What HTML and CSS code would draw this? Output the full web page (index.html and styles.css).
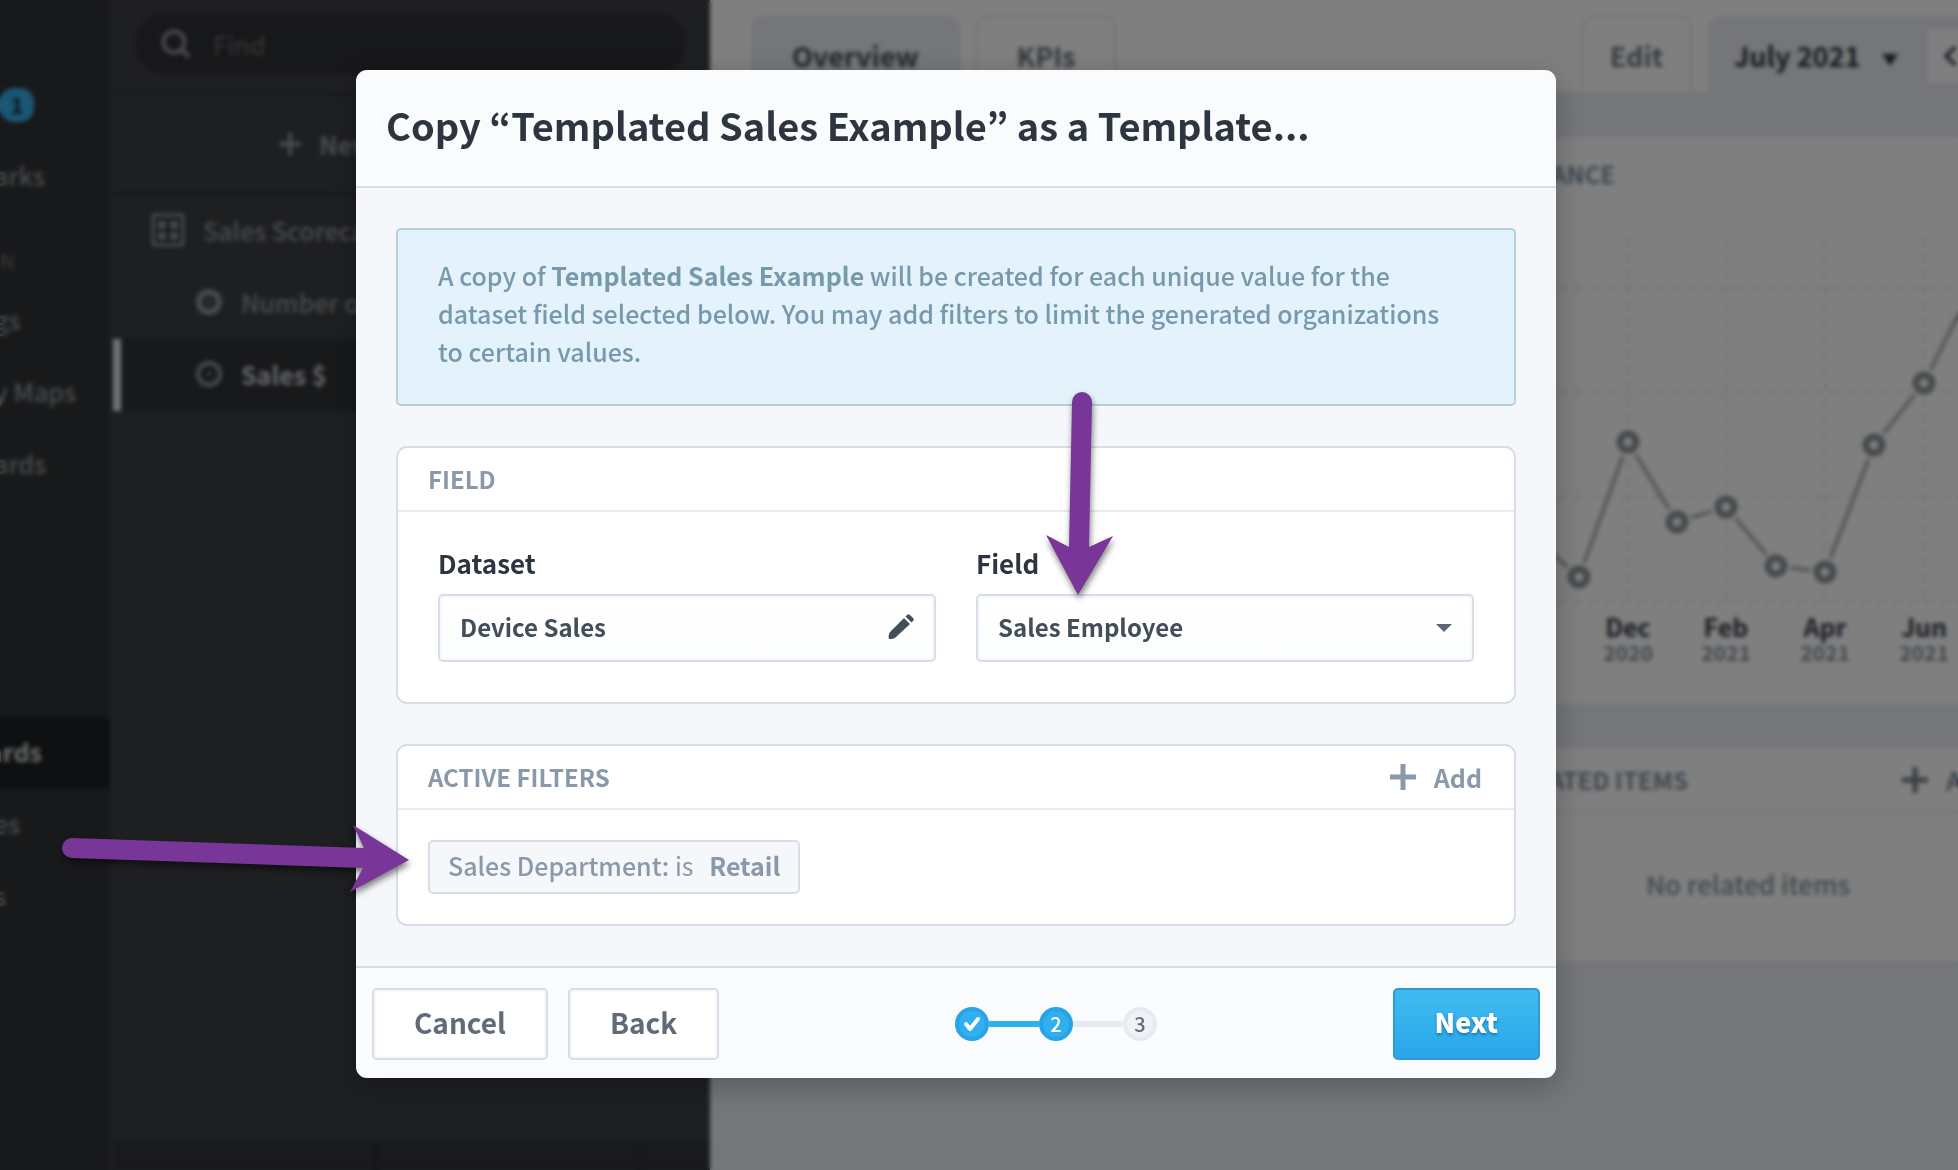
FILE: index.html
```html
<!DOCTYPE html>
<html lang="en">
<head>
    <meta charset="UTF-8">
    <meta name="viewport" content="width=device-width, initial-scale=1.0">
    <title>Copy as a Template</title>
    <link rel="stylesheet" href="styles.css">
</head>
<body>
    <div class="app">
        <nav class="nav">
            <ul>
                <li><span class="badge">1</span></li>
                <li><a href="#">arks</a></li>
                <li class="nav-heading">N</li>
                <li><a href="#">gs</a></li>
                <li><a href="#">y Maps</a></li>
                <li><a href="#">ards</a></li>
                <li></li>
                <li></li>
                <li></li>
                <li class="active"><a href="#">ards</a></li>
                <li><a href="#">es</a></li>
                <li><a href="#">s</a></li>
            </ul>
        </nav>

        <aside class="tree">
            <div class="tree-search">
                <label class="search">
                    <svg width="30" height="30" viewBox="0 0 30 30" fill="none" stroke="currentColor" stroke-width="4">
                        <circle cx="13" cy="13" r="10.5"/>
                        <path d="M20 20l8 8"/>
                    </svg>
                    <input type="text" placeholder="Find" aria-label="Find">
                </label>
            </div>
            <button class="tree-new" type="button">
                <svg width="22" height="22" viewBox="0 0 22 22" fill="none" stroke="currentColor" stroke-width="4"><path d="M11 0v22M0 11h22"/></svg>
                New
            </button>
            <ul class="tree-list">
                <li>
                    <svg width="34" height="34" viewBox="0 0 34 34" fill="none" stroke="currentColor" stroke-width="3">
                        <rect x="2" y="2" width="30" height="30" rx="2"/>
                        <g fill="currentColor" stroke="none"><circle cx="11" cy="12" r="4"/><circle cx="23" cy="12" r="4"/><circle cx="11" cy="23" r="4"/><circle cx="23" cy="23" r="4"/></g>
                    </svg>
                    Sales Scorecard
                </li>
                <li class="child">
                    <svg width="28" height="28" viewBox="0 0 28 28" fill="none" stroke="currentColor" stroke-width="6"><circle cx="14" cy="14" r="10"/><circle cx="14" cy="14" r="2" fill="currentColor" stroke="none"/></svg>
                    Number of
                </li>
                <li class="child active">
                    <svg width="28" height="28" viewBox="0 0 28 28" fill="none" stroke="currentColor" stroke-width="4"><circle cx="14" cy="14" r="11"/><circle cx="14" cy="14" r="2" fill="currentColor" stroke="none"/></svg>
                    Sales $
                </li>
            </ul>
            <div class="tree-toolbar"><span></span><span></span><span></span></div>
        </aside>

        <main class="main">
            <div class="tabs">
                <a class="tab current" href="#">Overview</a>
                <a class="tab" href="#">KPIs</a>
                <a class="tab tab-edit" href="#">Edit</a>
                <div class="period">
                    <button class="period-label" type="button">
                        July 2021
                        <svg width="16" height="12" viewBox="0 0 16 12" fill="currentColor"><path d="M0 0h16L8 12z"/></svg>
                    </button>
                    <button class="period-prev" type="button" aria-label="Previous period">
                        <svg width="16" height="20" viewBox="0 0 16 20" fill="none" stroke="currentColor" stroke-width="4"><path d="M13 1L4 10l9 9"/></svg>
                    </button>
                </div>
            </div>
            <div class="panels">
                <section class="panel">
                    <div class="panel-column">
                        <h2 class="panel-title performance">PERFORMANCE</h2>
                        <svg class="chart" width="418" height="500" viewBox="1540 204 418 500">
                            <g class="grid">
                                <path d="M1540 288H1958M1540 392H1958M1540 497H1958M1540 602H1958"/>
                                <path d="M1628 237V602M1726 237V602M1825 237V602M1924 237V602"/>
                            </g>
                            <path class="line" d="M1530 534L1579 577L1628 442L1677 522L1726 507L1776 566L1825 572L1874 445L1924 383L1973 285"/>
                            <g class="halos">
                                <circle cx="1579" cy="577" r="15"/>
                                <circle cx="1628" cy="442" r="15"/>
                                <circle cx="1677" cy="522" r="15"/>
                                <circle cx="1726" cy="507" r="15"/>
                                <circle cx="1776" cy="566" r="15"/>
                                <circle cx="1825" cy="572" r="15"/>
                                <circle cx="1874" cy="445" r="15"/>
                                <circle cx="1924" cy="383" r="15"/>
                            </g>
                            <g class="points">
                                <circle cx="1579" cy="577" r="8"/>
                                <circle cx="1628" cy="442" r="8"/>
                                <circle cx="1677" cy="522" r="8"/>
                                <circle cx="1726" cy="507" r="8"/>
                                <circle cx="1776" cy="566" r="8"/>
                                <circle cx="1825" cy="572" r="8"/>
                                <circle cx="1874" cy="445" r="8"/>
                                <circle cx="1924" cy="383" r="8"/>
                            </g>
                            <g class="months">
                                <text x="1628" y="637">Dec</text>
                                <text x="1726" y="637">Feb</text>
                                <text x="1825" y="637">Apr</text>
                                <text x="1924" y="637">Jun</text>
                            </g>
                            <g class="years">
                                <text x="1628" y="661">2020</text>
                                <text x="1726" y="661">2021</text>
                                <text x="1825" y="661">2021</text>
                                <text x="1924" y="661">2021</text>
                            </g>
                        </svg>
                    </div>
                </section>
                <section class="panel">
                    <div class="panel-column">
                        <div class="panel-head">
                            <h2 class="panel-title">RELATED ITEMS</h2>
                            <button class="panel-add" type="button">
                                <svg width="26" height="26" viewBox="0 0 26 26" fill="none" stroke="currentColor" stroke-width="5"><path d="M13 0v26M0 13h26"/></svg>
                                A
                            </button>
                        </div>
                        <p class="panel-empty">No related items</p>
                    </div>
                </section>
            </div>
        </main>
    </div>

    <div class="overlay">
        <form class="modal" role="dialog" aria-labelledby="modal-title">
            <header class="modal-header">
                <h1 id="modal-title">Copy “Templated Sales Example” as a Template...</h1>
            </header>
            <div class="modal-body">
                <p class="info">A copy of <b>Templated Sales Example</b> will be created for each unique value for the dataset field selected below. You may add filters to limit the generated organizations to certain values.</p>

                <section class="card">
                    <div class="card-header"><h2>FIELD</h2></div>
                    <div class="fields">
                        <div class="field">
                            <label for="dataset">Dataset</label>
                            <button class="control" id="dataset" type="button">
                                Device Sales
                                <svg width="26" height="26" viewBox="0 0 26 26" fill="currentColor"><path d="M1 25c-1-3 0-5 1-7L16 4l6 6L8 23c-2 2-4 2-7 2z"/><path d="M17.500 2.500L19 1c1-1 2-1 3 0l3 3c1 1 1 2 0 3l-1.500 1.500z"/></svg>
                            </button>
                        </div>
                        <div class="field">
                            <label for="field">Field</label>
                            <div class="select">
                                <select class="control" id="field">
                                    <option>Sales Employee</option>
                                </select>
                                <svg class="caret" width="16" height="8" viewBox="0 0 16 8" fill="currentColor"><path d="M0 0h16L8 8z"/></svg>
                            </div>
                        </div>
                    </div>
                </section>

                <section class="card">
                    <div class="card-header">
                        <h2>ACTIVE FILTERS</h2>
                        <button class="add" type="button">
                            <svg width="26" height="26" viewBox="0 0 26 26" fill="none" stroke="currentColor" stroke-width="5"><path d="M13 0v26M0 13h26"/></svg>
                            Add
                        </button>
                    </div>
                    <div class="filters">
                        <div class="chip">Sales Department: <span>is</span> <b>Retail</b></div>
                    </div>
                </section>
            </div>
            <footer class="modal-footer">
                <div class="actions">
                    <button class="btn" type="button">Cancel</button>
                    <button class="btn" type="button">Back</button>
                </div>
                <ol class="steps">
                    <li class="done">
                        <svg width="18" height="16" viewBox="0 0 18 16" fill="none" stroke="currentColor" stroke-width="4" stroke-linecap="round" stroke-linejoin="round"><path d="M3 8l4 5 8-10"/></svg>
                    </li>
                    <li class="done">2</li>
                    <li>3</li>
                </ol>
                <button class="btn primary" type="submit">Next</button>
            </footer>
        </form>
    </div>

    <svg class="arrows" width="1958" height="1170" viewBox="0 0 1958 1170" aria-hidden="true">
        <path d="M72 838A10 10 0 0 0 72 858L363 868L350 892L409 860L353 825L364 848Z"/>
        <path d="M1072 402A10 10 0 0 1 1092 402L1089 547L1113 536L1078 595L1046 535L1069 547Z"/>
    </svg>
</body>
</html>
```

FILE: styles.css
```css
* {
    box-sizing: border-box;
}

body {
    margin: 0;
    height: 100vh;
    overflow: hidden;
    position: relative;
    font-family: "Noto Sans CJK KR", "Noto Sans", sans-serif;
    font-size: 25px;
    font-weight: 500;
    line-height: 38px;
    color: #2d3640;
}

h1, h2, p, ul, ol {
    margin: 0;
    padding: 0;
}

ul, ol {
    list-style: none;
}

a {
    color: inherit;
    text-decoration: none;
}

button, input, select {
    font: inherit;
    color: inherit;
    border: 0;
    background: none;
    padding: 0;
    margin: 0;
}

svg {
    flex: none;
}

/* App behind the dialog */
.app {
    display: flex;
    height: 100%;
    overflow: hidden;
}

.nav {
    width: 110px;
    flex: none;
    padding-top: 69px;
    background: #313336;
    color: #92989b;
    overflow: hidden;
}

.nav li {
    display: flex;
    align-items: center;
    height: 72px;
}

.nav a {
    margin-left: -6px;
    padding-bottom: 4px;
}

.nav .nav-heading {
    padding-top: 24px;
    font-size: 20px;
    color: #64686b;
}

.nav .active {
    background: #1c2023;
    color: #d4d8da;
    font-weight: 700;
}

.nav .active a {
    margin-left: -12px;
}

.badge {
    width: 34px;
    height: 34px;
    border-radius: 14px;
    background: #33aee8;
    color: #23282c;
    font-size: 22px;
    font-weight: 700;
    line-height: 32px;
    text-align: center;
}

/* Scorecard tree */
.tree {
    width: 600px;
    flex: none;
    display: flex;
    flex-direction: column;
    border-left: 3px solid #3c3e42;
    background: #3c3e42;
    color: #92989b;
}

.tree-search {
    padding: 13px 24px 18px 22px;
    border-bottom: 3px solid #303236;
}

.search {
    display: flex;
    align-items: center;
    gap: 22px;
    height: 61px;
    padding: 0 26px;
    border-radius: 30px;
    background: #2f3033;
}

.search input {
    width: 100%;
    min-width: 0;
}

.search input::placeholder {
    color: #606468;
    opacity: 1;
}

.tree-new {
    display: flex;
    align-items: center;
    gap: 18px;
    height: 100px;
    padding-left: 166px;
    border-bottom: 3px solid #303236;
    font-weight: 700;
}

.tree-list {
    flex: 1;
}

.tree-list li {
    display: flex;
    align-items: center;
    gap: 18px;
    height: 72px;
    padding: 0 0 2px 38px;
    white-space: nowrap;
}

.tree-list .child {
    padding-left: 82px;
}

.tree-list .child.active {
    padding-left: 74px;
    border-left: 8px solid #e4e6e8;
    background: #303236;
    color: #c8ccd0;
    font-weight: 700;
}

.tree-list .active svg {
    color: #92989b;
}

.tree-toolbar {
    display: grid;
    grid-template-columns: 261px 1fr 74px;
    height: 29px;
    background: #323438;
}

.tree-toolbar span + span {
    border-left: 3px solid #2a2c30;
}

/* Main page */
.main {
    flex: 1;
    min-width: 0;
    display: flex;
    flex-direction: column;
    background: #fff;
}

.tabs {
    display: flex;
    gap: 16px;
    padding: 16px 0 0 41px;
    font-size: 27px;
}

.tab {
    height: 76px;
    padding: 19px 39px 0;
    border: 2px solid #e3e7ee;
    border-bottom: 0;
    border-radius: 12px 12px 0 0;
    color: #6b7684;
    font-weight: 700;
}

.tab.current {
    background: #e8ecf2;
    color: #46505c;
}

.tab-edit {
    margin-left: auto;
    padding: 19px 27px 0;
}

.period {
    display: flex;
    align-items: flex-start;
    width: 250px;
    padding: 13px 0 0 26px;
    border-radius: 12px 0 0 0;
    background: #e8ecf2;
    color: #2d3640;
}

.period-label {
    display: flex;
    align-items: center;
    gap: 22px;
    width: 194px;
    height: 54px;
    font-weight: 700;
    white-space: nowrap;
}

.period-label svg {
    margin-top: 8px;
}

.period-prev {
    flex: 1;
    display: flex;
    align-items: center;
    justify-content: flex-end;
    height: 54px;
    border-radius: 4px 0 0 4px;
    background: #fff;
    color: #4c5866;
}

.panels {
    flex: 1;
    display: flex;
    flex-direction: column;
    gap: 44px;
    padding-top: 45px;
    background: #e8ecf2;
}

.panel {
    display: flex;
    justify-content: flex-end;
    background: #fff;
    color: #8393a4;
}

.panel-column {
    width: 460px;
    display: flex;
    flex-direction: column;
    overflow: hidden;
}

.panel-title {
    font-size: 24px;
    font-weight: 700;
}

.performance {
    width: 117px;
    height: 67px;
    padding-top: 18px;
    direction: rtl;
}

.chart {
    align-self: flex-end;
}

.grid path {
    fill: none;
    stroke: #e4e6e8;
    stroke-width: 2;
    stroke-dasharray: 10 6;
}

.line {
    fill: none;
    stroke: #acb0b3;
    stroke-width: 4;
}

.halos circle {
    fill: #fff;
}

.points circle {
    fill: #fff;
    stroke: #8b9599;
    stroke-width: 7;
}

.months, .years {
    text-anchor: middle;
    font-weight: 700;
}

.months {
    font-size: 25px;
    fill: #343a44;
}

.years {
    font-size: 21px;
    fill: #8492a2;
}

.panel-head {
    display: flex;
    align-items: center;
    justify-content: space-between;
    height: 65px;
    padding-left: 6px;
    border-bottom: 2px solid #e8ecf2;
}

.panel-add {
    display: flex;
    align-items: center;
    gap: 18px;
    width: 56px;
    color: #6f7d8e;
}

.panel-empty {
    width: 500px;
    padding: 52px 0 58px;
    font-size: 26px;
    text-align: center;
}

/* Dialog */
.overlay {
    position: absolute;
    inset: 0;
    display: flex;
    align-items: flex-start;
    justify-content: center;
    padding: 70px 46px 0 0;
    background: rgba(0, 0, 0, 0.5);
    backdrop-filter: blur(2px);
}

.modal {
    width: 1200px;
    border-radius: 11px;
    background: #fafbfd;
    box-shadow: 0 8px 30px rgba(0, 0, 0, 0.25);
    overflow: hidden;
}

.modal-header {
    padding: 28px 30px 34px;
    border-bottom: 2px solid #d7dee6;
}

.modal-header h1 {
    font-size: 38px;
    font-weight: 700;
    line-height: 54px;
}

.modal-body {
    display: flex;
    flex-direction: column;
    gap: 40px;
    padding: 40px;
    background: #f5f7fb;
}

.info {
    padding: 26px 60px 34px 40px;
    border: 2px solid #b5cfdc;
    border-radius: 5px;
    background: #e4f3fb;
    color: #7799ac;
}

.card {
    border: 2px solid #d7dee6;
    border-radius: 11px;
    background: #fff;
}

.card-header {
    display: flex;
    align-items: center;
    justify-content: space-between;
    height: 64px;
    padding: 0 32px 0 30px;
    border-bottom: 2px solid #e6ebf2;
    color: #8a99a9;
}

.card-header h2 {
    font-size: 24px;
    font-weight: 700;
}

.add {
    display: flex;
    align-items: center;
    gap: 18px;
    font-weight: 700;
}

.fields {
    display: grid;
    grid-template-columns: 1fr 1fr;
    gap: 40px;
    padding: 32px 40px 40px;
}

.field {
    display: flex;
    flex-direction: column;
    gap: 12px;
}

.field label {
    font-size: 26px;
    font-weight: 700;
}

.control {
    display: flex;
    align-items: center;
    justify-content: space-between;
    width: 100%;
    height: 68px;
    padding: 0 20px 2px;
    border: 2px solid #d7dee8;
    border-radius: 5px;
    background: linear-gradient(#fff, #fcfdfe);
    box-shadow: inset 0 0 0 2px #f6f8fb;
    color: #434e5a;
    font-size: 24px;
    font-weight: 700;
}

.select {
    position: relative;
}

.select select {
    appearance: none;
}

.caret {
    position: absolute;
    top: 30px;
    right: 22px;
    color: #5c6674;
    pointer-events: none;
}

.filters {
    display: flex;
    padding: 30px;
}

.chip {
    padding: 4px 18px 8px;
    border: 2px solid #d7dee6;
    border-radius: 5px;
    background: #f5f7fb;
    color: #8a99a9;
}

.chip span {
    margin-right: 10px;
    font-weight: 400;
}

.modal-footer {
    display: flex;
    align-items: center;
    justify-content: space-between;
    padding: 20px 16px 18px;
    border-top: 2px solid #d7dee6;
}

.actions {
    display: flex;
    gap: 20px;
}

.btn {
    height: 72px;
    padding: 0 40px 4px;
    border: 2px solid #d7dee6;
    border-radius: 5px;
    background: #fff;
    box-shadow: inset 0 0 0 2px #f6f8fb;
    color: #5f6b79;
    font-size: 28px;
    font-weight: 700;
}

.btn.primary {
    border-color: #2f9ad2;
    background: linear-gradient(#40bbf1, #28a6ea);
    box-shadow: none;
    color: #fff;
    font-size: 27px;
    font-weight: 900;
    text-shadow: 0 2px 3px rgba(0, 60, 110, 0.5);
}

.steps {
    display: flex;
    gap: 50px;
}

.steps li {
    position: relative;
    display: flex;
    align-items: center;
    justify-content: center;
    width: 34px;
    height: 34px;
    border: 4px solid #e6ebf1;
    border-radius: 50%;
    background: #eff2f7;
    color: #5f6b79;
    font-size: 20px;
    line-height: 26px;
}

.steps .done {
    border-color: #27a3e6;
    background: #30b0ee;
    color: #fff;
}

/* bar that joins a step to the one before it */
.steps li + li::before {
    content: "";
    position: absolute;
    top: 10px;
    right: 30px;
    width: 50px;
    height: 6px;
    background: #e6ebf1;
}

.steps .done + .done::before {
    background: #30b0ee;
}

.arrows {
    position: absolute;
    top: 0;
    left: 0;
    fill: #783699;
    filter: drop-shadow(1px 4px 3px rgba(0, 0, 0, 0.5));
    pointer-events: none;
}
```
